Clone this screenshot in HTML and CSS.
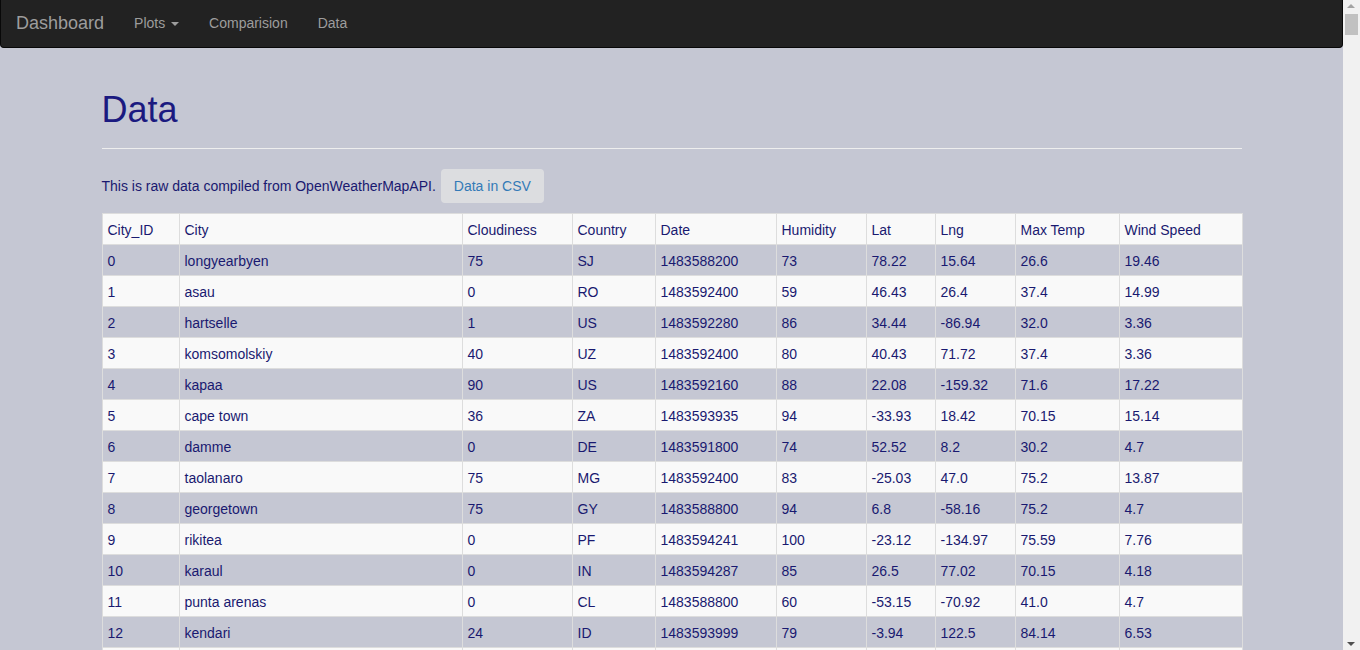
FILE: index.html
```html
<!DOCTYPE html>
<html lang="en">
<head>
<meta charset="utf-8">
<title>Data</title>
<link rel="stylesheet" href="styles.css">
</head>
<body>
<div class="page">
  <nav class="navbar">
    <a class="brand" href="#">Dashboard</a>
    <ul class="nav">
      <li><a href="#">Plots <span class="caret"></span></a></li>
      <li><a href="#">Comparision</a></li>
      <li><a href="#">Data</a></li>
    </ul>
  </nav>
  <main class="container">
    <div class="page-header">
      <h1>Data</h1>
    </div>
    <p class="intro"><span>This is raw data compiled from OpenWeatherMapAPI.</span><a class="btn" href="#">Data in CSV</a></p>
    <table class="data-table">
      <colgroup>
        <col class="c-id"><col class="c-city"><col class="c-cloud"><col class="c-country"><col class="c-date"><col class="c-hum"><col class="c-lat"><col class="c-lng"><col class="c-temp"><col class="c-wind">
      </colgroup>
      <thead>
        <tr><th>City_ID</th><th>City</th><th>Cloudiness</th><th>Country</th><th>Date</th><th>Humidity</th><th>Lat</th><th>Lng</th><th>Max Temp</th><th>Wind Speed</th></tr>
      </thead>
      <tbody>
        <tr><td>0</td><td>longyearbyen</td><td>75</td><td>SJ</td><td>1483588200</td><td>73</td><td>78.22</td><td>15.64</td><td>26.6</td><td>19.46</td></tr>
        <tr><td>1</td><td>asau</td><td>0</td><td>RO</td><td>1483592400</td><td>59</td><td>46.43</td><td>26.4</td><td>37.4</td><td>14.99</td></tr>
        <tr><td>2</td><td>hartselle</td><td>1</td><td>US</td><td>1483592280</td><td>86</td><td>34.44</td><td>-86.94</td><td>32.0</td><td>3.36</td></tr>
        <tr><td>3</td><td>komsomolskiy</td><td>40</td><td>UZ</td><td>1483592400</td><td>80</td><td>40.43</td><td>71.72</td><td>37.4</td><td>3.36</td></tr>
        <tr><td>4</td><td>kapaa</td><td>90</td><td>US</td><td>1483592160</td><td>88</td><td>22.08</td><td>-159.32</td><td>71.6</td><td>17.22</td></tr>
        <tr><td>5</td><td>cape town</td><td>36</td><td>ZA</td><td>1483593935</td><td>94</td><td>-33.93</td><td>18.42</td><td>70.15</td><td>15.14</td></tr>
        <tr><td>6</td><td>damme</td><td>0</td><td>DE</td><td>1483591800</td><td>74</td><td>52.52</td><td>8.2</td><td>30.2</td><td>4.7</td></tr>
        <tr><td>7</td><td>taolanaro</td><td>75</td><td>MG</td><td>1483592400</td><td>83</td><td>-25.03</td><td>47.0</td><td>75.2</td><td>13.87</td></tr>
        <tr><td>8</td><td>georgetown</td><td>75</td><td>GY</td><td>1483588800</td><td>94</td><td>6.8</td><td>-58.16</td><td>75.2</td><td>4.7</td></tr>
        <tr><td>9</td><td>rikitea</td><td>0</td><td>PF</td><td>1483594241</td><td>100</td><td>-23.12</td><td>-134.97</td><td>75.59</td><td>7.76</td></tr>
        <tr><td>10</td><td>karaul</td><td>0</td><td>IN</td><td>1483594287</td><td>85</td><td>26.5</td><td>77.02</td><td>70.15</td><td>4.18</td></tr>
        <tr><td>11</td><td>punta arenas</td><td>0</td><td>CL</td><td>1483588800</td><td>60</td><td>-53.15</td><td>-70.92</td><td>41.0</td><td>4.7</td></tr>
        <tr><td>12</td><td>kendari</td><td>24</td><td>ID</td><td>1483593999</td><td>79</td><td>-3.94</td><td>122.5</td><td>84.14</td><td>6.53</td></tr>
        <tr><td>13</td><td>hilo</td><td>75</td><td>US</td><td>1483592100</td><td>83</td><td>19.71</td><td>-155.08</td><td>73.4</td><td>8.05</td></tr>
      </tbody>
    </table>
  </main>
</div>
<div class="scrollbar" aria-hidden="true">
  <span class="sb-up"></span>
  <span class="sb-thumb"></span>
  <span class="sb-down"></span>
</div>
</body>
</html>
```

FILE: styles.css
```css
html, body {
  margin: 0;
  padding: 0;
}
body {
  background: #c5c7d3;
  color: #191970;
  font-family: "Liberation Sans", Arial, Helvetica, sans-serif;
  font-size: 14px;
  line-height: 20px;
  overflow: hidden;
}
a {
  text-decoration: none;
}
.page {
  width: 1343px;
}

.navbar {
  display: flex;
  align-items: flex-start;
  height: 47px;
  background: #222222;
  border: 1px solid #080808;
  border-top: none;
  border-radius: 0 0 4px 4px;
}
.brand {
  color: #9d9d9d;
  font-size: 18px;
  line-height: 20px;
  padding: 13px 15px 14px 15px;
}
.nav {
  display: flex;
  list-style: none;
  margin: 0;
  padding: 0;
}
.nav a {
  display: block;
  color: #9d9d9d;
  padding: 13px 15px 14px 15px;
  line-height: 20px;
}
.caret {
  display: inline-block;
  width: 0;
  height: 0;
  margin-left: 2px;
  vertical-align: middle;
  border-top: 4px solid #9d9d9d;
  border-left: 4px solid transparent;
  border-right: 4px solid transparent;
}

.container {
  width: 1140px;
  margin: 0 auto;
  padding: 42px 0 40px;
}
.page-header {
  padding-bottom: 9px;
  border-bottom: 1px solid #eeeeee;
  margin-bottom: 20px;
}
.page-header h1 {
  margin: 0 0 9px;
  font-size: 36px;
  font-weight: 500;
  line-height: 1.1;
  color: #1b1a80;
}
.intro {
  display: flex;
  align-items: center;
  gap: 5px;
  margin: 0 0 10px;
}
.btn {
  display: inline-block;
  padding: 6px 12px;
  border: 1px solid transparent;
  border-radius: 4px;
  background: #dcdde0;
  color: #337ab7;
  font-size: 14px;
  line-height: 20px;
}

.data-table {
  width: 1140px;
  border-collapse: collapse;
  border-spacing: 0;
  table-layout: fixed;
  background: #f9f9f9;
  border: 1px solid #dddddd;
}
.data-table th,
.data-table td {
  border: 1px solid #dddddd;
  padding: 6px 5px 4px;
  text-align: left;
  font-weight: normal;
  line-height: 20px;
  white-space: nowrap;
  overflow: hidden;
}
.data-table tbody tr:nth-child(odd) {
  background: #c5c7d3;
}
.c-id { width: 77px; }
.c-city { width: 283px; }
.c-cloud { width: 110px; }
.c-country { width: 83px; }
.c-date { width: 121px; }
.c-hum { width: 90px; }
.c-lat { width: 69px; }
.c-lng { width: 80px; }
.c-temp { width: 104px; }
.c-wind { width: 123px; }

/* drawn browser scrollbar, overlaying the right edge of the window */
.scrollbar {
  position: fixed;
  top: 0;
  right: 0;
  width: 17px;
  height: 100%;
  background: #f1f1f1;
}
.sb-up,
.sb-down {
  position: absolute;
  left: 4px;
  width: 0;
  height: 0;
  border-left: 4px solid transparent;
  border-right: 4px solid transparent;
}
.sb-up {
  top: 4px;
  border-bottom: 4px solid #a3a3a3;
}
.sb-down {
  bottom: 4px;
  border-top: 4px solid #505050;
}
.sb-thumb {
  position: absolute;
  top: 14px;
  left: 2px;
  width: 13px;
  height: 21px;
  background: #c1c1c1;
}
```
